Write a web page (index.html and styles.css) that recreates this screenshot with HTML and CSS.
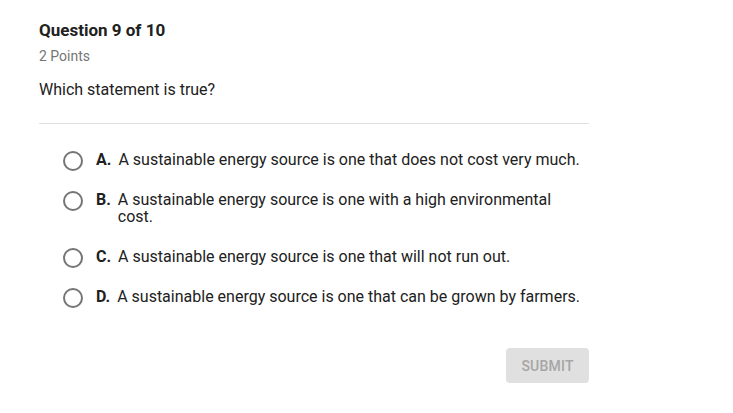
FILE: index.html
```html
<!DOCTYPE html>
<html>
<head>
<meta charset="utf-8">
<link rel="stylesheet" href="styles.css">
</head>
<body>
<div class="quiz">
  <h1 class="title">Question 9 of 10</h1>
  <div class="points">2 Points</div>
  <div class="question">Which statement is true?</div>
  <hr class="divider">
  <ul class="options">
    <li class="option"><span class="radio"></span><span class="letter">A.</span><span class="text">A sustainable energy source is one that does not cost very much.</span></li>
    <li class="option"><span class="radio"></span><span class="letter">B.</span><span class="text">A sustainable energy source is one with a high environmental cost.</span></li>
    <li class="option"><span class="radio"></span><span class="letter">C.</span><span class="text">A sustainable energy source is one that will not run out.</span></li>
    <li class="option"><span class="radio"></span><span class="letter">D.</span><span class="text">A sustainable energy source is one that can be grown by farmers.</span></li>
  </ul>
  <div class="actions"><button class="submit">SUBMIT</button></div>
</div>
</body>
</html>
```
FILE: styles.css
```css
html, body {
  margin: 0;
  padding: 0;
  background: #ffffff;
}
body {
  font-family: Roboto, "Liberation Sans", sans-serif;
  color: #212121;
}
.quiz {
  width: 550px;
  padding: 20px 0 0 39px;
}
.title {
  margin: 0;
  font-size: 17px;
  font-weight: 700;
  line-height: 20px;
  color: #212121;
}
.points {
  margin-top: 7px;
  font-size: 14px;
  line-height: 18px;
  color: #757575;
}
.question {
  margin-top: 16px;
  font-size: 16px;
  line-height: 18px;
  color: #212121;
}
.divider {
  margin: 24px 0 0 0;
  border: 0;
  border-top: 1px solid #e0e0e0;
  height: 0;
}
.options {
  list-style: none;
  margin: 0;
  padding: 27px 0 0 24px;
  display: flex;
  flex-direction: column;
  gap: 23px;
}
.option {
  display: flex;
  align-items: flex-start;
  font-size: 16px;
  line-height: 17px;
}
.radio {
  flex: none;
  width: 16px;
  height: 16px;
  border: 2px solid #757575;
  border-radius: 50%;
  margin: 0 13px -4px 0;
  box-sizing: content-box;
}
.letter {
  flex: none;
  font-weight: 700;
  margin-right: 7px;
}
.text {
  flex: 1;
  max-width: 465px;
}
.actions {
  display: flex;
  justify-content: flex-end;
  margin-top: 43px;
}
.submit {
  font-family: Roboto, "Liberation Sans", sans-serif;
  font-size: 14px;
  font-weight: 500;
  letter-spacing: 0.2px;
  color: #a6a6a6;
  background: #e0e0e0;
  border: 0;
  border-radius: 4px;
  width: 83px;
  height: 35px;
  padding: 0;
}
```
